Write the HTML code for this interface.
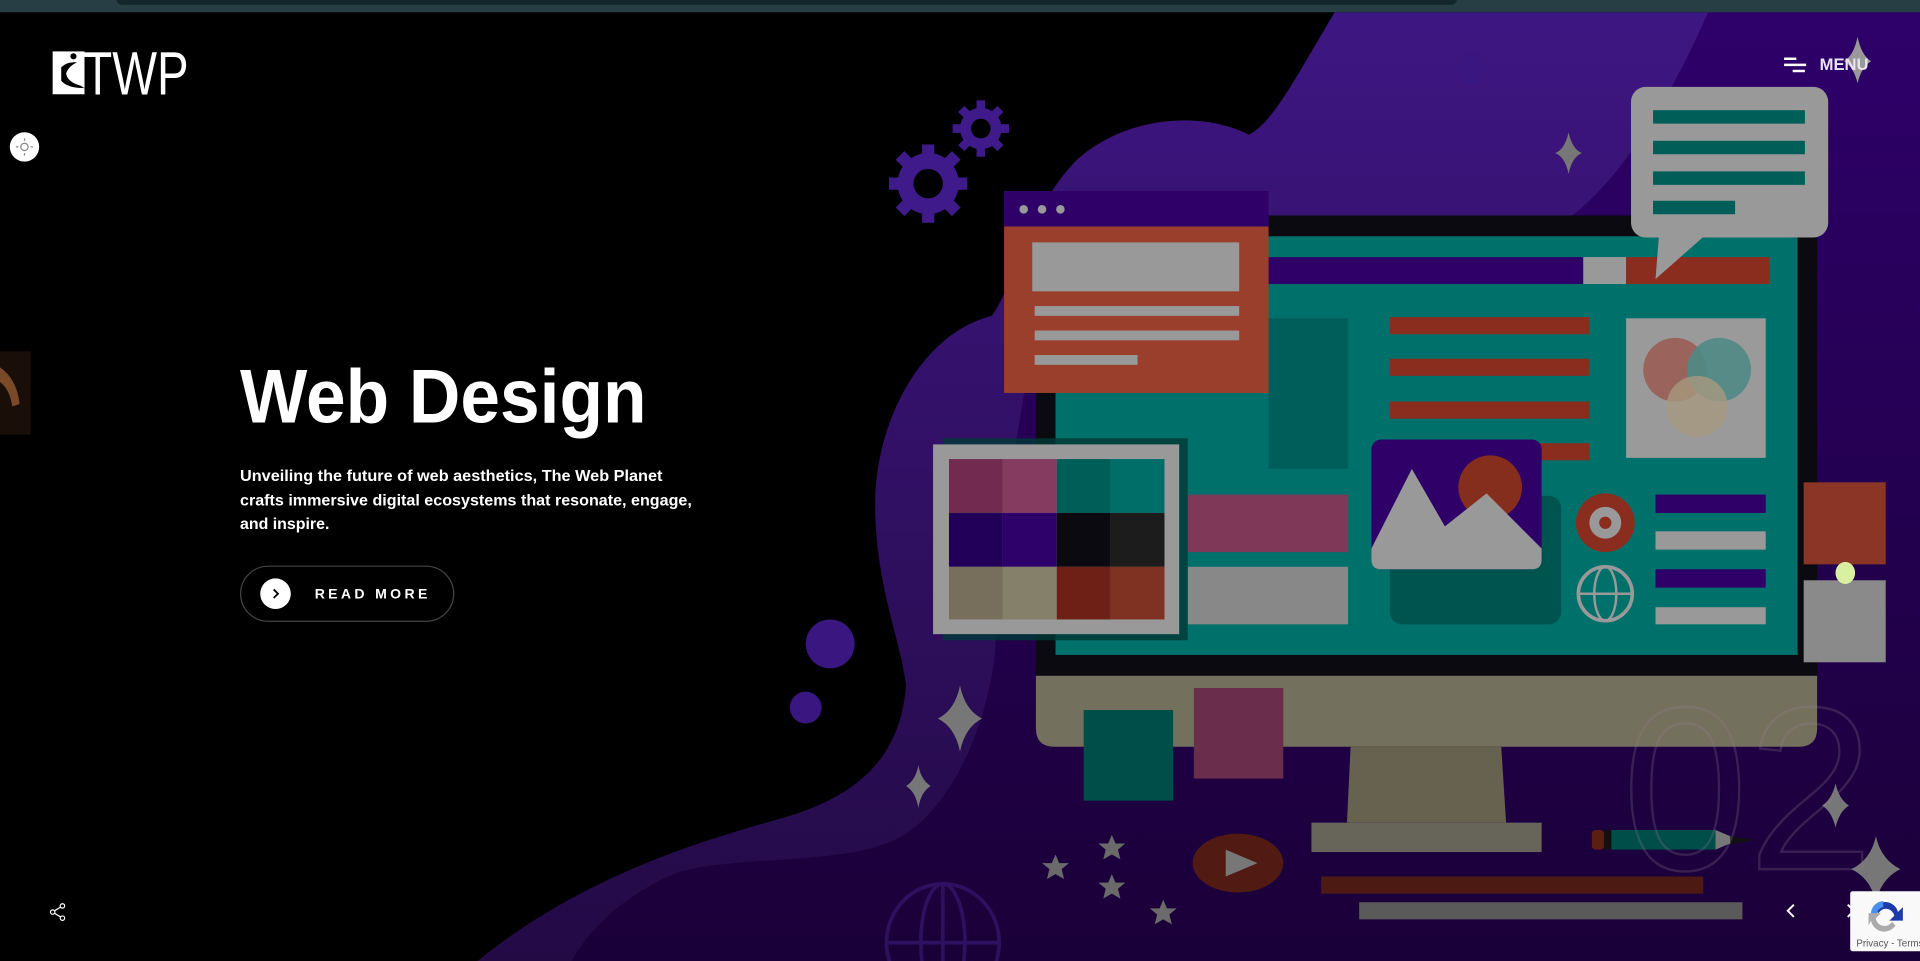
<!DOCTYPE html>
<html><head><meta charset="utf-8"><style>
html,body{margin:0;padding:0;background:#000;overflow:hidden}
svg{display:block;width:1920px;height:961px}
</style></head><body>
<svg viewBox="0 0 1568 785" preserveAspectRatio="none" xmlns="http://www.w3.org/2000/svg" font-family="'Liberation Sans',sans-serif">
<defs>
<linearGradient id="pg" x1="0" y1="0" x2="0" y2="1"><stop offset="0" stop-color="#3e1682"/><stop offset="1" stop-color="#230a45"/></linearGradient>
<linearGradient id="dg" x1="0" y1="0" x2="0" y2="1"><stop offset="0" stop-color="#2e006a"/><stop offset="1" stop-color="#1a0038"/></linearGradient>
</defs>
<rect width="1568" height="785" fill="#000"/>
<!-- purple blobs -->
<path d="M1568 10 L1090 10 C1060 60 1040 100 1020 110 C980 90 920 95 880 130 C840 170 830 230 810 258 C760 270 720 330 715 400 C712 470 735 520 740 560 C735 620 700 650 640 668 C560 690 470 720 390 785 L1568 785 Z" fill="url(#pg)"/>
<path d="M1568 10 L1395 10 C1360 90 1310 170 1260 190 C1190 230 1120 250 1050 270 L840 300 L820 420 L812 540 C800 620 760 680 720 690 C680 705 600 700 555 712 C510 730 480 760 467 785 L1568 785Z" fill="url(#dg)"/>
<!-- top bar -->
<rect x="0" y="0" width="1568" height="10" fill="#263e44"/>
<rect x="95" y="-6" width="1095" height="10" rx="5" fill="#12262c"/>
<!-- circles -->
<circle cx="1202" cy="57" r="13" fill="#3a1680"/>
<circle cx="678" cy="526" r="20" fill="#3a1680"/>
<circle cx="658" cy="578" r="13" fill="#3a1680"/>
<!-- gears -->
<g fill="#3f1a8a">
<circle cx="758" cy="150" r="25"/>
<g stroke="#3f1a8a" stroke-width="10"><line x1="758" y1="118" x2="758" y2="182"/><line x1="726" y1="150" x2="790" y2="150"/><line x1="735" y1="127" x2="781" y2="173"/><line x1="781" y1="127" x2="735" y2="173"/></g>
<circle cx="801" cy="105" r="17"/>
<g stroke="#3f1a8a" stroke-width="7"><line x1="801" y1="82" x2="801" y2="128"/><line x1="778" y1="105" x2="824" y2="105"/><line x1="785" y1="89" x2="817" y2="121"/><line x1="817" y1="89" x2="785" y2="121"/></g>
</g>
<circle cx="758" cy="150" r="12" fill="#000"/>
<circle cx="801" cy="105" r="8" fill="#000"/>
<!-- monitor -->
<rect x="846" y="176" width="638" height="380" fill="#0b0a10"/>
<rect x="862" y="193" width="606" height="342" fill="#00706a"/>
<path d="M846 552 H1484 V595 Q1484 610 1469 610 H861 Q846 610 846 595Z" fill="#74705e"/>
<path d="M1103 610 H1226 L1230 672 H1100Z" fill="#66624f"/>
<rect x="1071" y="672" width="188" height="24" fill="#67645a"/>
<!-- screen content -->
<rect x="1036" y="210" width="257" height="22" fill="#2e0068"/>
<rect x="1293" y="210" width="35" height="22" fill="#999"/>
<rect x="1328" y="210" width="117" height="22" fill="#8a2d1f"/>
<rect x="1036" y="260" width="65" height="123" fill="#005e5a"/>
<g fill="#8a2d1f"><rect x="1135" y="259" width="163" height="14"/><rect x="1135" y="293" width="163" height="14"/><rect x="1135" y="328" width="163" height="14"/><rect x="1135" y="362" width="163" height="14"/></g>
<rect x="1328" y="260" width="114" height="114" fill="#9a9a9a"/>
<circle cx="1368" cy="302" r="26" fill="#9a5e55" opacity=".9"/>
<circle cx="1404" cy="302" r="26" fill="#4f8a86" opacity=".9"/>
<circle cx="1386" cy="332" r="25" fill="#a69880" opacity=".8"/>
<rect x="970" y="404" width="131" height="47" fill="#7f3858"/>
<rect x="970" y="463" width="131" height="47" fill="#888"/>
<rect x="1135" y="405" width="140" height="105" rx="10" fill="#00544f"/>
<rect x="1120" y="359" width="139" height="106" rx="8" fill="#2e0068"/>
<circle cx="1217" cy="398" r="26" fill="#852e1e"/>
<path d="M1120 448 L1153 383 L1180 430 L1214 403 L1259 448 V457 Q1259 465 1251 465 H1128 Q1120 465 1120 457Z" fill="#999"/>
<circle cx="1311" cy="427" r="24" fill="#8a2d1f"/>
<circle cx="1311" cy="427" r="13" fill="#999"/><circle cx="1311" cy="427" r="5" fill="#8a2d1f"/>
<circle cx="1311" cy="485" r="22" fill="none" stroke="#999" stroke-width="3"/>
<ellipse cx="1311" cy="485" rx="9" ry="22" fill="none" stroke="#999" stroke-width="2"/>
<line x1="1289" y1="485" x2="1333" y2="485" stroke="#999" stroke-width="2"/>
<g fill="#2e0068"><rect x="1352" y="404" width="90" height="15"/><rect x="1352" y="465" width="90" height="15"/></g>
<g fill="#999"><rect x="1352" y="434" width="90" height="15"/><rect x="1352" y="496" width="90" height="14"/></g>
<!-- orange window -->
<rect x="820" y="156" width="216" height="165" fill="#9a3f2c"/>
<rect x="820" y="156" width="216" height="29" fill="#2e0068"/>
<g fill="#999"><circle cx="836" cy="171" r="3.5"/><circle cx="851" cy="171" r="3.5"/><circle cx="866" cy="171" r="3.5"/>
<rect x="843" y="198" width="169" height="40"/><rect x="845" y="250" width="167" height="8"/><rect x="845" y="270" width="167" height="8"/><rect x="845" y="290" width="84" height="8"/></g>
<!-- palette -->
<rect x="770" y="358" width="200" height="165" fill="#003a37" opacity=".8"/>
<rect x="762" y="363" width="201" height="155" fill="#999"/>
<rect x="775" y="375" width="44" height="44" fill="#722a50"/><rect x="819" y="375" width="44" height="44" fill="#853a60"/>
<rect x="863" y="375" width="44" height="44" fill="#005e58"/><rect x="907" y="375" width="44" height="44" fill="#006e68"/>
<rect x="775" y="419" width="44" height="44" fill="#22005a"/><rect x="819" y="419" width="44" height="44" fill="#2e006a"/>
<rect x="863" y="419" width="44" height="44" fill="#0b0a10"/><rect x="907" y="419" width="44" height="44" fill="#1c1c1c"/>
<rect x="775" y="463" width="44" height="43" fill="#776e5c"/><rect x="819" y="463" width="44" height="43" fill="#85806a"/>
<rect x="863" y="463" width="44" height="43" fill="#6e2017"/><rect x="907" y="463" width="44" height="43" fill="#7f3122"/>
<!-- speech bubble -->
<rect x="1332" y="71" width="161" height="123" rx="12" fill="#999"/>
<path d="M1355 190 L1352 228 L1395 190Z" fill="#999"/>
<g fill="#005e58"><rect x="1350" y="90" width="124" height="11"/><rect x="1350" y="115" width="124" height="11"/><rect x="1350" y="140" width="124" height="11"/><rect x="1350" y="164" width="67" height="11"/></g>
<!-- right blocks -->
<rect x="1473" y="394" width="67" height="67" fill="#8a3526"/>
<rect x="1473" y="474" width="67" height="67" fill="#8a8a8a"/>
<ellipse cx="1507" cy="468" rx="8" ry="9" fill="#d8f0a0"/>
<!-- bottom -->
<rect x="885" y="580" width="73" height="74" fill="#004e4a"/>
<rect x="975" y="562" width="73" height="74" fill="#6a2d4c"/>
<ellipse cx="1011" cy="705" rx="37" ry="24" fill="#511a12"/>
<path d="M1001 694 L1027 705 L1001 716Z" fill="#777"/>
<rect x="1079" y="716" width="312" height="14" fill="#4c1a12"/>
<rect x="1110" y="737" width="313" height="14" fill="#5a5a5a"/>
<rect x="1300" y="678" width="10" height="16" rx="3" fill="#5a1e12"/>
<rect x="1310" y="678" width="6" height="16" fill="#111"/>
<rect x="1316" y="678" width="85" height="16" fill="#004e4a"/>
<path d="M1401 678 L1420 686 L1401 694Z" fill="#777"/><path d="M1413 683 L1432 686 L1413 690Z" fill="#111"/>
<g fill="#6a6a6a">
<path d="M908 682 l3 7 8 0 -6 5 2 8 -7-4 -7 4 2-8 -6-5 8 0z"/>
<path d="M862 698 l3 7 8 0 -6 5 2 8 -7-4 -7 4 2-8 -6-5 8 0z"/>
<path d="M908 714 l3 7 8 0 -6 5 2 8 -7-4 -7 4 2-8 -6-5 8 0z"/>
<path d="M950 735 l3 7 8 0 -6 5 2 8 -7-4 -7 4 2-8 -6-5 8 0z"/>
</g>
<g fill="none" stroke="#2e1060" stroke-width="3"><ellipse cx="770" cy="770" rx="46" ry="48"/><ellipse cx="770" cy="770" rx="18" ry="48"/><line x1="724" y1="770" x2="816" y2="770"/><line x1="770" y1="722" x2="770" y2="785"/></g>
<!-- sparkles -->
<g fill="#777">
<path d="M1281 108 Q1284 122 1292 125 Q1284 128 1281 142 Q1278 128 1270 125 Q1278 122 1281 108Z"/>
<path d="M1517 30 Q1520 45 1528 50 Q1520 55 1517 68 Q1514 55 1506 50 Q1514 45 1517 30Z" fill="#999"/>
<path d="M784 560 Q788 580 802 587 Q788 594 784 614 Q780 594 766 587 Q780 580 784 560Z"/>
<path d="M750 625 Q752 637 760 642 Q752 647 750 660 Q748 647 740 642 Q748 637 750 625Z"/>
<path d="M1499 640 Q1502 653 1510 658 Q1502 663 1499 676 Q1496 663 1488 658 Q1496 653 1499 640Z"/>
<path d="M1532 683 Q1536 702 1552 710 Q1536 718 1532 737 Q1528 718 1512 710 Q1528 702 1532 683Z"/>
</g>
<text x="1325" y="710" font-size="190" fill="none" stroke="#8a8090" stroke-opacity=".25" stroke-width="2" textLength="205" lengthAdjust="spacingAndGlyphs">02</text>
<!-- logo -->
<rect x="43" y="42" width="26" height="35" fill="#fff"/>
<path d="M50 55 Q55 50 63 51 Q56 54 54 60 Q55 67 66 70 L69 72 Q55 72 50 66Z" fill="#000"/>
<circle cx="60" cy="46" r="2.5" fill="#000"/>
<text x="68" y="77" font-size="50" fill="#fff" font-family="'Liberation Sans Narrow','Liberation Sans',sans-serif" textLength="86" lengthAdjust="spacingAndGlyphs">TWP</text>
<!-- theme button -->
<circle cx="20" cy="120" r="12" fill="#fff"/>
<circle cx="20" cy="120" r="3" fill="none" stroke="#888" stroke-width="1"/>
<g stroke="#888" stroke-width="1"><line x1="20" y1="113" x2="20" y2="115"/><line x1="20" y1="125" x2="20" y2="127"/><line x1="13" y1="120" x2="15" y2="120"/><line x1="25" y1="120" x2="27" y2="120"/></g>
<!-- left sliver -->
<rect x="0" y="287" width="25" height="68" fill="#1a0e08"/>
<path d="M0 300 Q14 310 16 330 L10 332 Q8 318 0 312Z" fill="#7a4a28"/>
<!-- text -->
<text x="196" y="345" font-size="62" font-weight="bold" fill="#fff" textLength="332" lengthAdjust="spacingAndGlyphs">Web Design</text>
<g font-size="12.5" font-weight="bold" fill="#fff">
<text x="196" y="393" textLength="345" lengthAdjust="spacingAndGlyphs">Unveiling the future of web aesthetics, The Web Planet</text>
<text x="196" y="413" textLength="369" lengthAdjust="spacingAndGlyphs">crafts immersive digital ecosystems that resonate, engage,</text>
<text x="196" y="432" textLength="73" lengthAdjust="spacingAndGlyphs">and inspire.</text>
</g>
<rect x="196.5" y="462.5" width="174" height="45" rx="22.5" fill="none" stroke="#444" stroke-width="1"/>
<circle cx="225" cy="485" r="12.5" fill="#fff"/>
<path d="M223.5 481.5 L227 485 L223.5 488.5" fill="none" stroke="#000" stroke-width="1.5"/>
<text x="257" y="489" font-size="11.5" font-weight="bold" fill="#fff" textLength="92" lengthAdjust="spacing">READ MORE</text>
<!-- menu -->
<g stroke="#fff" stroke-width="2"><line x1="1457" y1="48" x2="1467" y2="48"/><line x1="1457" y1="53" x2="1475" y2="53"/><line x1="1464" y1="58" x2="1474" y2="58"/></g>
<text x="1486" y="57" font-size="13.5" font-weight="bold" fill="#e8e4f0" textLength="40" lengthAdjust="spacingAndGlyphs">MENU</text>
<!-- share -->
<g fill="none" stroke="#fff" stroke-width="1"><circle cx="51" cy="740" r="1.8"/><circle cx="43" cy="745" r="1.8"/><circle cx="51" cy="750" r="1.8"/><path d="M49.5 741 L44.5 744 M44.5 746 L49.5 749"/></g>
<!-- arrows -->
<path d="M1465 739 L1460 744 L1465 749" fill="none" stroke="#fff" stroke-width="1.6"/>
<path d="M1509 739 L1514 744 L1509 749" fill="none" stroke="#fff" stroke-width="1.6"/>
<!-- recaptcha -->
<rect x="1511" y="728" width="60" height="49" rx="2" fill="#f9f9f9"/>
<path d="M1530 742 A11 11 0 0 1 1550 745 L1554 741 L1554 752 L1543 752 L1547 748 A7 7 0 0 0 1534 746Z" fill="#1c3aa9"/>
<path d="M1528 745 A11 11 0 0 1 1538 736 L1538 741 A6 6 0 0 0 1533 748 L1528 748Z" fill="#4a90f0"/>
<path d="M1548 756 A11 11 0 0 1 1528 752 L1526 756 L1526 746 L1536 746 L1532 750 A7 7 0 0 0 1545 753Z" fill="#ababab"/>
<text x="1516" y="773" font-size="8" fill="#555">Privacy - Terms</text>
</svg>
</body></html>
